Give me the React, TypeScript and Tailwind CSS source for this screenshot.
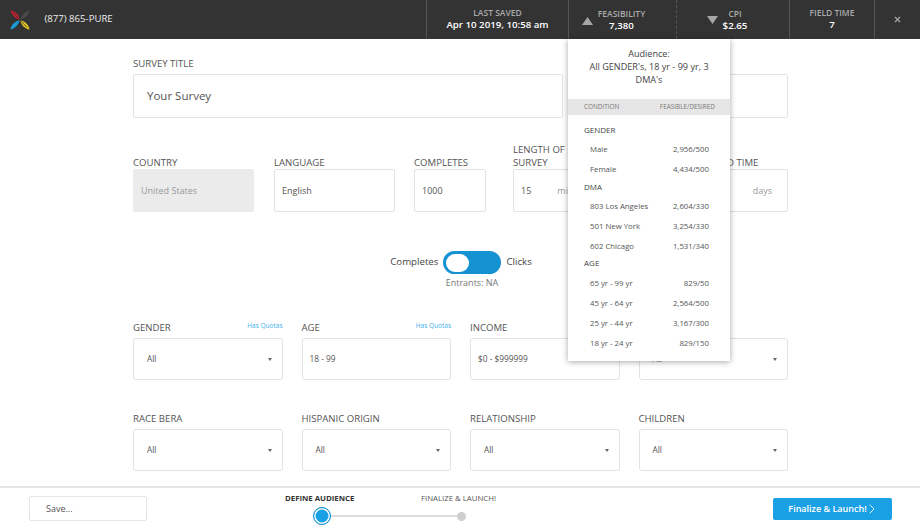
import { ReactNode } from 'react'
import { ChevronRight, X } from 'lucide-react'

const Logo = () => (
  <svg width="20" height="20" viewBox="0 0 20 20" className="ml-[9.5px] shrink-0">
    <path d="M9.5 9.5C7 9.5 2.5 6.5 0.5 0.5C4 0.5 9 4 9.5 9.5Z" fill="#c8202f" />
    <path d="M10.5 9.5C11 6 15 1.5 19.5 0.5C19 4 15 8.5 10.5 9.5Z" fill="#4a4a4a" />
    <path d="M9.5 10.5C9 14 5 18.5 0.5 19.5C1 15 5 11 9.5 10.5Z" fill="#1b9ad6" />
    <path d="M10.5 10.5C14 10.5 18.5 14 19.5 19.5C15 19 11 15 10.5 10.5Z" fill="#e6c822" />
    <path d="M3 2.5L8.5 8.5M17 17.5L11.5 11.5" stroke="#333" strokeWidth="0.8" />
  </svg>
)

const Triangle = ({ up }: { up?: boolean }) => (
  <svg width="11" height="8" viewBox="0 0 11 8" className="shrink-0">
    <path d={up ? 'M5.5 0L11 8H0Z' : 'M5.5 8L11 0H0Z'} fill="#a6a6a6" />
  </svg>
)

const Caret = () => <span className="ml-auto w-0 h-0 border-x-[2.5px] border-x-transparent border-t-[3px] border-t-[#666]" />

function Label({ children, quotas, tight }: { children: ReactNode; quotas?: boolean; tight?: boolean }) {
  return (
    <div className={`flex justify-between h-[11px] items-end text-[9.6px] leading-[13px] text-[#555] ${tight ? '' : 'mb-[4px]'}`}>
      <span className="whitespace-nowrap">{children}</span>
      {quotas && <span className="text-[6.5px] leading-[8px] mb-[4px] text-[#3fb0ea]">Has Quotas</span>}
    </div>
  )
}

function SelectField({ label, value, quotas, input }: { label: ReactNode; value: string; quotas?: boolean; input?: boolean }) {
  return (
    <div>
      <Label quotas={quotas}>{label}</Label>
      <div className={`h-[42px] border border-[#e3e3e3] rounded-[3px] flex items-center text-[8.3px] text-[#555] ${input ? 'px-[7px]' : 'pl-[13px] pr-[10px]'}`}>
        <span>{value}</span>
        {!input && <Caret />}
      </div>
    </div>
  )
}

function PopRow({ name, value }: { name: string; value: string }) {
  return (
    <div className="flex justify-between h-[20px] items-center pl-[22px] pr-[21px] text-[7.8px] text-[#555]">
      <span>{name}</span>
      <span>{value}</span>
    </div>
  )
}

const PopHead = ({ children, up }: { children: ReactNode; up?: boolean }) => (
  <div className={`pl-[16px] h-[17px] pb-[1px] flex items-center text-[8px] text-[#444] ${up ? '-translate-y-[2px]' : '-translate-y-px'}`}>{children}</div>
)

function Popover() {
  return (
    <div className="absolute z-10 left-[-1px] top-[39px] w-[162px] h-[322px] bg-white shadow-[0_1px_6px_rgba(0,0,0,0.35)] text-[#444]">
      <div className="h-[60px] pt-[8px] px-[14px] text-center text-[9.1px] leading-[13px]">
        Audience:
        <br />
        All GENDER's, 18 yr - 99 yr, 3 DMA's
      </div>
      <div className="h-[16px] bg-[#e6e6e6] flex items-center justify-between pl-[16px] pr-[15px] text-[6.4px] text-[#777]">
        <span>CONDITION</span>
        <span>FEASIBLE/DESIRED</span>
      </div>
      <div className="pt-[7.5px]">
        <PopHead>GENDER</PopHead>
        <PopRow name="Male" value="2,956/500" />
        <PopRow name="Female" value="4,434/500" />
        <PopHead>DMA</PopHead>
        <PopRow name="803 Los Angeles" value="2,604/330" />
        <PopRow name="501 New York" value="3,254/330" />
        <PopRow name="602 Chicago" value="1,531/340" />
        <PopHead up>AGE</PopHead>
        <PopRow name="65 yr - 99 yr" value="829/50" />
        <PopRow name="45 yr - 64 yr" value="2,564/500" />
        <PopRow name="25 yr - 44 yr" value="3,167/300" />
        <PopRow name="18 yr - 24 yr" value="829/150" />
      </div>
    </div>
  )
}

function Header() {
  return (
    <header className="h-[39px] shrink-0 bg-[#333333] flex items-center text-white relative z-20">
      <Logo />
      <span className="ml-[15px] text-[9.6px] text-[#eee]">(877) 865-PURE</span>
      <div className="ml-auto flex h-full">
        <div className="w-[142px] border-l border-[#555] flex flex-col items-center justify-center">
          <span className="text-[8.5px] leading-[10px] font-semibold text-[#aaa]">LAST SAVED</span>
          <span className="text-[9.7px] leading-[13px] font-semibold">Apr 10 2019, 10:58 am</span>
        </div>
        <div className="relative w-[108px] border-l border-[#555] flex items-center justify-center gap-[5px] pr-[18px] pt-[2px]">
          <Triangle up />
          <div className="flex flex-col items-center">
            <span className="text-[8.5px] leading-[10px] font-semibold text-[#aaa]">FEASIBILITY</span>
            <span className="text-[9.7px] leading-[13px] font-semibold">7,380</span>
          </div>
          <Popover />
        </div>
        <div className="w-[113px] border-l border-dashed border-[#555] flex items-center justify-center gap-[5px] pr-[12px] pt-[1px]">
          <Triangle />
          <div className="flex flex-col items-center">
            <span className="text-[8.5px] leading-[10px] font-semibold text-[#aaa]">CPI</span>
            <span className="text-[9.7px] leading-[13px] font-semibold">$2.65</span>
          </div>
        </div>
        <div className="w-[85px] border-l border-[#555] flex flex-col items-center justify-center">
          <span className="text-[8.5px] leading-[10px] font-semibold text-[#aaa]">FIELD TIME</span>
          <span className="text-[9.7px] leading-[13px] font-semibold">7</span>
        </div>
        <div className="w-[46px] border-l border-[#555] flex items-center justify-center">
          <X size={9} strokeWidth={3} className="text-[#aaa]" />
        </div>
      </div>
    </header>
  )
}

function TopForm() {
  return (
    <>
      <div className="flex gap-[5px] pt-[20px]">
        <div className="w-[430px]">
          <Label>SURVEY TITLE</Label>
          <div className="h-[44px] border border-[#e3e3e3] rounded-[2px] flex items-center px-[13px] text-[11.5px] text-[#555]">Your Survey</div>
        </div>
        <div className="flex-1">
          <Label>&nbsp;</Label>
          <div className="h-[44px] border border-[#e3e3e3] rounded-[2px]" />
        </div>
      </div>
      <div className="flex mt-[40px]">
        <div className="w-[121px] mr-[20px]">
          <Label tight>COUNTRY</Label>
          <div className="h-[43px] bg-[#ebebeb] rounded-[2px] flex items-center px-[8px] text-[9px] text-[#999]">United States</div>
        </div>
        <div className="w-[121px] mr-[19px]">
          <Label tight>LANGUAGE</Label>
          <div className="h-[43px] border border-[#e3e3e3] rounded-[2px] flex items-center px-[7px] text-[9px] text-[#555]">English</div>
        </div>
        <div className="w-[72px] mr-[27px]">
          <Label tight>COMPLETES</Label>
          <div className="h-[43px] border border-[#e3e3e3] rounded-[2px] flex items-center px-[7px] text-[9px] text-[#555]">1000</div>
        </div>
        <div className="w-[72px]">
          <div className="h-[11px] flex items-end text-[9.6px] leading-[13px] text-[#555]">
            <span>LENGTH OF SURVEY</span>
          </div>
          <div className="h-[43px] border border-[#e3e3e3] rounded-[2px] flex items-center px-[7px] text-[9px] text-[#555]">
            <span>15</span>
            <span className="ml-[26px] text-[#999]">min</span>
          </div>
        </div>
        <div className="ml-auto w-[79px]">
          <Label tight>FIELD TIME</Label>
          <div className="h-[43px] border border-[#e3e3e3] rounded-[2px] flex items-center justify-end px-[15px] text-[9px] text-[#999]">days</div>
        </div>
      </div>
    </>
  )
}

function Toggle() {
  return (
    <div className="mt-[39px] flex flex-col items-center">
      <div className="flex items-center gap-[5px] text-[9.7px] text-[#444] pl-[1px]">
        <span>Completes</span>
        <span className="w-[58px] h-[23px] rounded-full bg-[#1592d2] flex items-center pl-[2.5px]">
          <span className="w-[23px] h-[18px] rounded-full bg-white" />
        </span>
        <span>Clicks</span>
      </div>
      <div className="mt-[3px] ml-[23px] text-[9px] leading-[12px] text-[#777]">Entrants: NA</div>
    </div>
  )
}

function Footer() {
  return (
    <footer className="h-[43px] shrink-0 border-t-2 border-[#e6e6e6] flex items-center pl-[29px] pr-[28px] bg-white">
      <div className="w-[118px] h-[25px] border border-[#e6e6e6] rounded-[2px] flex items-center pl-[16px] text-[9px] text-[#555]">Save...</div>
      <div className="ml-[138px] w-[211px] h-full flex flex-col">
        <div className="flex justify-between pt-[5px] text-[7.8px] leading-[10px]">
          <span className="font-bold text-[#333]">DEFINE AUDIENCE</span>
          <span className="text-[#555]">FINALIZE &amp; LAUNCH!</span>
        </div>
        <div className="flex items-center pl-[28px] pr-[30px] mt-[4px]">
          <span className="w-[18px] h-[18px] shrink-0 rounded-full border border-[#1592d2] bg-[#1aa0e4] ring-[1.5px] ring-white ring-inset" />
          <span className="flex-1 h-[2px] bg-[#dddddd]" />
          <span className="w-[9px] h-[9px] shrink-0 rounded-full bg-[#cfcfcf]" />
        </div>
      </div>
      <div className="ml-auto w-[119px] h-[22px] bg-[#1aa0e4] rounded-[2px] flex items-center justify-center text-[9px] font-semibold text-white">
        Finalize &amp; Launch!
        <ChevronRight size={16} strokeWidth={1.3} className="-ml-[3px] -mr-[3px]" />
      </div>
    </footer>
  )
}

export default function App() {
  return (
    <div className="h-screen flex flex-col overflow-hidden bg-white font-['Open_Sans',sans-serif]">
      <Header />
      <main className="flex-1 overflow-hidden pl-[133px] pr-[132px]">
        <TopForm />
        <Toggle />
        <div className="grid grid-cols-4 gap-x-[19px] gap-y-[34px] mt-[34px]">
          <SelectField label="GENDER" value="All" quotas />
          <SelectField label="AGE" value="18 - 99" quotas input />
          <SelectField label="INCOME" value="$0 - $999999" input />
          <SelectField label={<>&nbsp;</>} value="All" />
          <SelectField label="RACE BERA" value="All" />
          <SelectField label="HISPANIC ORIGIN" value="All" />
          <SelectField label="RELATIONSHIP" value="All" />
          <SelectField label="CHILDREN" value="All" />
        </div>
      </main>
      <Footer />
    </div>
  )
}
